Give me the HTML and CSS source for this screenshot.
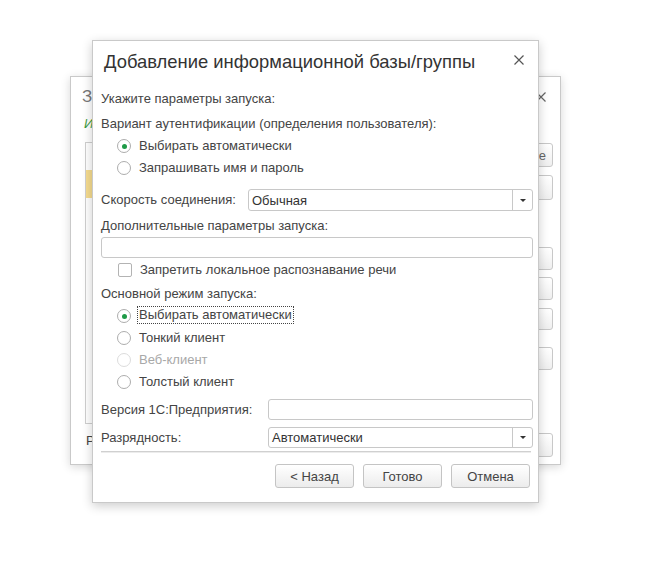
FILE: index.html
```html
<!DOCTYPE html>
<html lang="ru">
<head>
<meta charset="utf-8">
<title>Добавление информационной базы/группы</title>
<link rel="stylesheet" href="styles.css">
</head>
<body>
<div class="desk">
  <section class="win back">
    <header class="back-head">
      <span class="back-title">З</span>
      <svg class="close" width="10" height="10" viewBox="0 0 10 10"><path d="M0.5 0.5L9.5 9.5M9.5 0.5L0.5 9.5" stroke="#666" stroke-width="1.2" fill="none"/></svg>
    </header>
    <div class="back-body">
      <div class="back-left">
        <div class="ib-label">И</div>
        <div class="ib-list"><div class="ib-sel"></div></div>
        <div class="ib-path">Р</div>
      </div>
      <div class="back-btns">
        <div class="bbtn first">1С:Предприятие</div>
        <div class="bbtn"></div>
        <div class="bbtn"></div>
        <div class="bbtn"></div>
        <div class="bbtn"></div>
        <div class="bbtn"></div>
        <div class="bbtn"></div>
      </div>
    </div>
  </section>

  <section class="win front">
    <header class="f-head">
      <h1 class="f-title">Добавление информационной базы/группы</h1>
      <svg class="close f-close" width="10" height="10" viewBox="0 0 10 10"><path d="M0.5 0.5L9.5 9.5M9.5 0.5L0.5 9.5" stroke="#555" stroke-width="1.2" fill="none"/></svg>
    </header>
    <div class="lbl">Укажите параметры запуска:</div>
    <div class="lbl m5">Вариант аутентификации (определения пользователя):</div>
    <div class="radio m1"><span class="rc on"></span><span class="rt">Выбирать автоматически</span></div>
    <div class="radio"><span class="rc"></span><span class="rt">Запрашивать имя и пароль</span></div>
    <div class="field m10">
      <span class="flabel w-speed">Скорость соединения:</span>
      <div class="select"><span class="val">Обычная</span><span class="arr"><span class="tri"></span></span></div>
    </div>
    <div class="lbl m5">Дополнительные параметры запуска:</div>
    <div class="input m1"></div>
    <div class="check m2"><span class="cb"></span><span class="rt">Запретить локальное распознавание речи</span></div>
    <div class="lbl m4">Основной режим запуска:</div>
    <div class="radio m1"><span class="rc on"></span><span class="rt focus">Выбирать автоматически</span></div>
    <div class="radio"><span class="rc"></span><span class="rt">Тонкий клиент</span></div>
    <div class="radio disabled"><span class="rc"></span><span class="rt">Веб-клиент</span></div>
    <div class="radio"><span class="rc"></span><span class="rt">Толстый клиент</span></div>
    <div class="field m6">
      <span class="flabel w-ver">Версия 1С:Предприятия:</span>
      <div class="input grow"></div>
    </div>
    <div class="field m7">
      <span class="flabel w-ver">Разрядность:</span>
      <div class="select"><span class="val">Автоматически</span><span class="arr"><span class="tri"></span></span></div>
    </div>
    <div class="sep"></div>
    <div class="buttons">
      <div class="btn">&lt; Назад</div>
      <div class="btn">Готово</div>
      <div class="btn">Отмена</div>
    </div>
  </section>
</div>
</body>
</html>
```

FILE: styles.css
```css
* { box-sizing: border-box; }

body {
  margin: 0;
  background: #fff;
  font-family: "Liberation Sans", Arial, sans-serif;
  font-size: 13px;
  color: #444;
}

.desk {
  position: relative;
  width: 655px;
  height: 588px;
  overflow: hidden;
}

.win {
  position: absolute;
  background: #fff;
  border: 1px solid #c9c9c9;
  box-shadow: 0 2px 9px rgba(0, 0, 0, 0.16);
}

/* ---------- background window ---------- */
.back {
  left: 70px;
  top: 76px;
  width: 491px;
  height: 389px;
  display: flex;
  flex-direction: column;
  overflow: hidden;
}

.back-head {
  height: 37px;
  display: flex;
  justify-content: space-between;
  align-items: flex-start;
  padding: 9px 14px 0 11px;
  flex-shrink: 0;
}

.back-title {
  font-size: 17px;
  line-height: 22px;
  color: #777;
}

.back-head .close { margin-top: 6px; }

.back-body {
  flex: 1;
  display: flex;
  padding-right: 7px;
}

.back-left {
  flex: 1;
  padding-left: 14px;
  padding-right: 8px;
  display: flex;
  flex-direction: column;
}

.ib-label {
  height: 20px;
  line-height: 20px;
  font-style: italic;
  color: #3b9b3f;
  margin-left: -1px;
}

.ib-list {
  margin-top: 8px;
  height: 282px;
  border: 1px solid #cfcfcf;
  padding-top: 27px;
}

.ib-sel {
  height: 28px;
  background: #f6dc8f;
}

.ib-path {
  margin-top: 7px;
  height: 20px;
  line-height: 20px;
  padding-left: 1px;
}

.back-btns {
  width: 110px;
  display: flex;
  flex-direction: column;
}

.bbtn {
  height: 23px;
  border: 1px solid #c8c8c8;
  border-radius: 3px;
  background: linear-gradient(#fff, #efefef);
  display: flex;
  align-items: center;
  justify-content: center;
  color: #666;
}

.bbtn.first {
  justify-content: flex-end;
  padding-right: 6px;
}

.bbtn:nth-child(1) { margin-top: 29px; height: 24px; }
.bbtn:nth-child(2) { margin-top: 8px; height: 25px; }
.bbtn:nth-child(3) { margin-top: 47px; }
.bbtn:nth-child(4) { margin-top: 7px; }
.bbtn:nth-child(5) { margin-top: 8px; height: 22px; }
.bbtn:nth-child(6) { margin-top: 17px; }
.bbtn:nth-child(7) { margin-top: 63px; height: 24px; }

/* ---------- front dialog ---------- */
.front {
  left: 92px;
  top: 40px;
  width: 447px;
  height: 463px;
  padding: 0 5px 0 8px;
  display: flex;
  flex-direction: column;
  box-shadow: 0 3px 10px rgba(0, 0, 0, 0.2);
}

.f-head {
  height: 48px;
  display: flex;
  justify-content: space-between;
  align-items: flex-start;
  padding-top: 10px;
  flex-shrink: 0;
}

.f-title {
  margin: 0 0 0 3px;
  font-size: 18.4px;
  line-height: 22px;
  font-weight: normal;
  color: #333;
}

.f-close {
  margin-top: 4px;
  margin-right: 9px;
}

.lbl {
  height: 20px;
  line-height: 20px;
  white-space: nowrap;
}

.m1 { margin-top: 1px; }
.m2 { margin-top: 2px; }
.m4 { margin-top: 4px; }
.m5 { margin-top: 5px; }
.m6 { margin-top: 6px; }
.m7 { margin-top: 7px; }
.m10 { margin-top: 10px; }

.radio {
  height: 22px;
  display: flex;
  align-items: center;
  padding-left: 16px;
  gap: 6px;
}

.rc {
  width: 14px;
  height: 14px;
  border: 1px solid #adadad;
  border-radius: 50%;
  background: #fff;
  display: flex;
  align-items: center;
  justify-content: center;
  flex-shrink: 0;
}

.rc.on::after {
  content: "";
  width: 5px;
  height: 5px;
  border-radius: 50%;
  background: #1e9a47;
}

.rt {
  line-height: 16px;
  border: 1px dotted transparent;
  padding: 0 1px;
  white-space: nowrap;
}

.rt.focus {
  border-color: #444;
  margin-top: -3px;
}

.radio.disabled .rc { border-color: #dcdcdc; }
.radio.disabled .rt { color: #a8a8a8; }

.check {
  height: 20px;
  display: flex;
  align-items: center;
  padding-left: 17px;
  gap: 6px;
}

.cb {
  width: 14px;
  height: 14px;
  border: 1px solid #b3b3b3;
  border-radius: 2px;
  background: #fff;
  flex-shrink: 0;
}

.field {
  display: flex;
  align-items: center;
  height: 22px;
}

.field.m6, .field.m7 { height: 21px; }

.flabel {
  line-height: 20px;
  white-space: nowrap;
  flex-shrink: 0;
}

.w-speed { width: 147px; }
.w-ver { width: 167px; }

.select {
  flex: 1;
  height: 100%;
  display: flex;
  border: 1px solid #c8c8c8;
  border-radius: 3px;
  background: #fff;
}

.select .val {
  flex: 1;
  padding-left: 3px;
  display: flex;
  align-items: center;
  color: #333;
}

.select .arr {
  width: 20px;
  border-left: 1px solid #c8c8c8;
  display: flex;
  align-items: center;
  justify-content: center;
}

.tri {
  width: 0;
  height: 0;
  border-left: 3px solid transparent;
  border-right: 3px solid transparent;
  border-top: 3px solid #333;
}

.input {
  height: 21px;
  border: 1px solid #c8c8c8;
  border-radius: 3px;
  background: #fff;
}

.input.grow {
  flex: 1;
  height: 100%;
}

.sep {
  margin-top: 3px;
  margin-right: 2px;
  height: 2px;
  border-top: 1px solid #d0d0d0;
  border-bottom: 1px solid #ececec;
}

.buttons {
  margin-top: 11px;
  margin-right: 3px;
  display: flex;
  justify-content: flex-end;
  gap: 9px;
}

.btn {
  width: 79px;
  height: 24px;
  border: 1px solid #c4c4c4;
  border-radius: 3px;
  background: linear-gradient(#fff, #ececec);
  display: flex;
  align-items: center;
  justify-content: center;
  color: #444;
}
```
